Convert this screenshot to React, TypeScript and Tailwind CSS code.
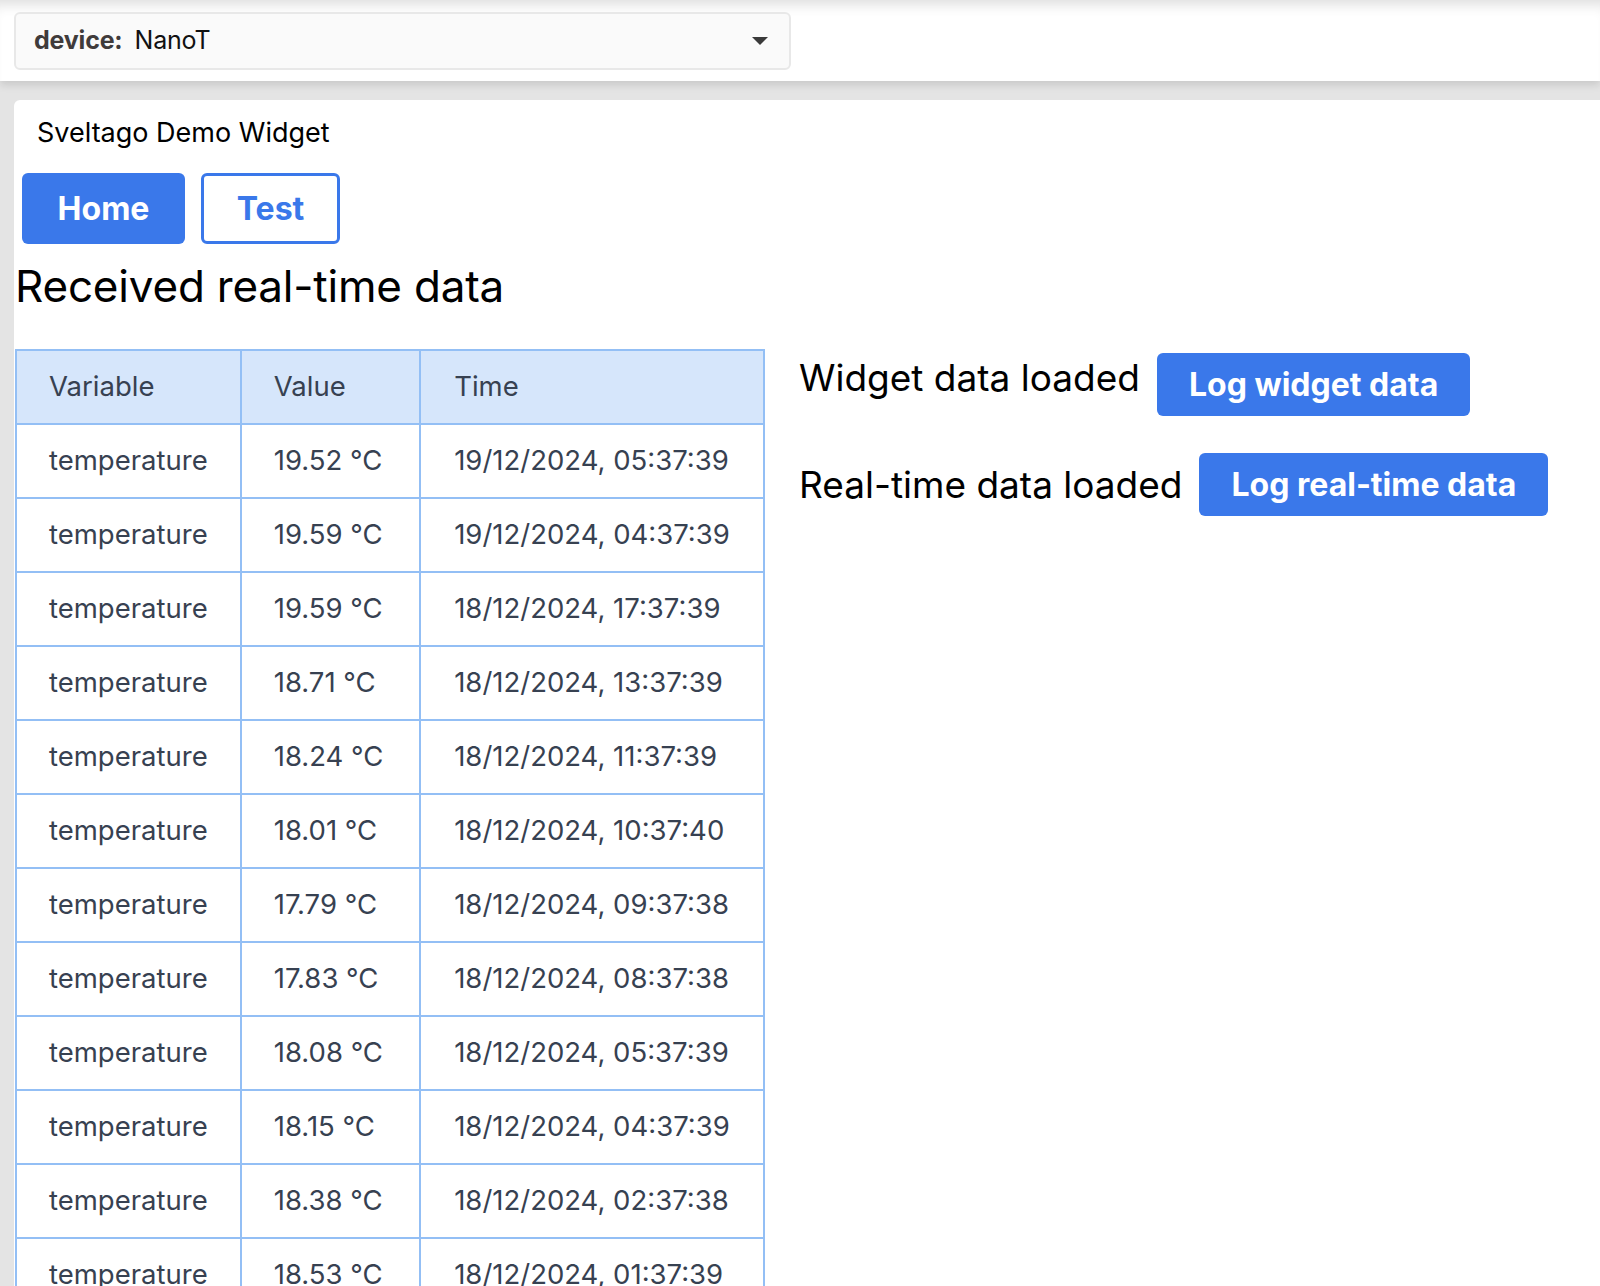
import React from 'react';

const rows = [
  { name: 'temperature', value: '19.52 °C', time: '19/12/2024, 05:37:39' },
  { name: 'temperature', value: '19.59 °C', time: '19/12/2024, 04:37:39' },
  { name: 'temperature', value: '19.59 °C', time: '18/12/2024, 17:37:39' },
  { name: 'temperature', value: '18.71 °C', time: '18/12/2024, 13:37:39' },
  { name: 'temperature', value: '18.24 °C', time: '18/12/2024, 11:37:39' },
  { name: 'temperature', value: '18.01 °C', time: '18/12/2024, 10:37:40' },
  { name: 'temperature', value: '17.79 °C', time: '18/12/2024, 09:37:38' },
  { name: 'temperature', value: '17.83 °C', time: '18/12/2024, 08:37:38' },
  { name: 'temperature', value: '18.08 °C', time: '18/12/2024, 05:37:39' },
  { name: 'temperature', value: '18.15 °C', time: '18/12/2024, 04:37:39' },
  { name: 'temperature', value: '18.38 °C', time: '18/12/2024, 02:37:38' },
  { name: 'temperature', value: '18.53 °C', time: '18/12/2024, 01:37:39' },
];

export default function App() {
  return (
    <div className="min-h-screen bg-[#e4e4e4] font-['Inter',sans-serif] overflow-hidden h-[1286px]">
      {/* Device selector bar */}
      <header className="relative z-10 h-[81px] bg-white px-[14px] pt-[12px] shadow-[inset_0_14px_14px_-10px_rgba(0,0,0,0.14),0_4px_8px_rgba(0,0,0,0.12)]">
        <div className="flex h-[58px] w-[777px] items-center justify-between rounded-md border-2 border-[#e8e8e8] bg-[#fafafa] pl-[18px] pr-[18px]">
          <div className="flex items-center gap-[12px] text-[25px] tracking-[-0.2px]">
            <span className="font-bold text-[#3f3b3b]">device:</span>
            <span className="text-[#111]">NanoT</span>
          </div>
          <svg width="18" height="10" viewBox="0 0 18 10" className="mr-[2px]">
            <path d="M1 1h16L9 9z" fill="#3a3a3a" />
          </svg>
        </div>
      </header>

      {/* Widget panel */}
      <div className="pl-[14px] pt-[19px]">
        <main className="h-[1200px] rounded-tl-md bg-white">
          <div className="pl-[23px] pt-[14px] text-[27px] leading-[38px] text-black">Sveltago Demo Widget</div>

          <nav className="flex gap-[16px] pl-[8px] pt-[21px]">
            <button className="h-[71px] w-[163px] rounded-md bg-[#3a78ea] text-[32px] font-bold text-white">Home</button>
            <button className="h-[71px] w-[139px] rounded-md border-[3px] border-[#3a78ea] bg-white text-[32px] font-bold text-[#3a78ea]">Test</button>
          </nav>

          <h1 className="pl-[1px] pt-[14px] text-[44px] leading-[56px] tracking-[-0.2px] text-black">Received real-time data</h1>

          <div className="mt-[35px] flex items-start gap-[34px] pl-[1px]">
            <table className="w-[750px] border-collapse text-left text-[27.5px] text-[#374151]">
              <colgroup>
                <col className="w-[225px]" />
                <col className="w-[180px]" />
                <col className="w-[345px]" />
              </colgroup>
              <thead>
                <tr className="h-[74px] bg-[#d6e6fb]">
                  <th className="border-2 border-[#93bff5] pl-[32px] font-normal">Variable</th>
                  <th className="border-2 border-[#93bff5] pl-[32px] font-normal">Value</th>
                  <th className="border-2 border-[#93bff5] pl-[33px] font-normal">Time</th>
                </tr>
              </thead>
              <tbody>
                {rows.map((r, i) => (
                  <tr key={i} className="h-[74px]">
                    <td className="border-2 border-[#93bff5] pl-[32px]">{r.name}</td>
                    <td className="border-2 border-[#93bff5] pl-[32px]">{r.value}</td>
                    <td className="border-2 border-[#93bff5] pl-[33px]">{r.time}</td>
                  </tr>
                ))}
              </tbody>
            </table>

            <div className="flex flex-col gap-[37px] pt-[4px]">
              <div className="flex items-start gap-[17px]">
                <span className="text-[37px] leading-[49px] text-black">Widget data loaded</span>
                <button className="h-[63px] rounded-md bg-[#3a78ea] px-[32px] text-[32px] font-bold text-white">Log widget data</button>
              </div>
              <div className="flex items-center gap-[17px]">
                <span className="text-[37px] text-black">Real-time data loaded</span>
                <button className="h-[63px] rounded-md bg-[#3a78ea] px-[32px] text-[32px] font-bold text-white">Log real-time data</button>
              </div>
            </div>
          </div>
        </main>
      </div>
    </div>
  );
}
